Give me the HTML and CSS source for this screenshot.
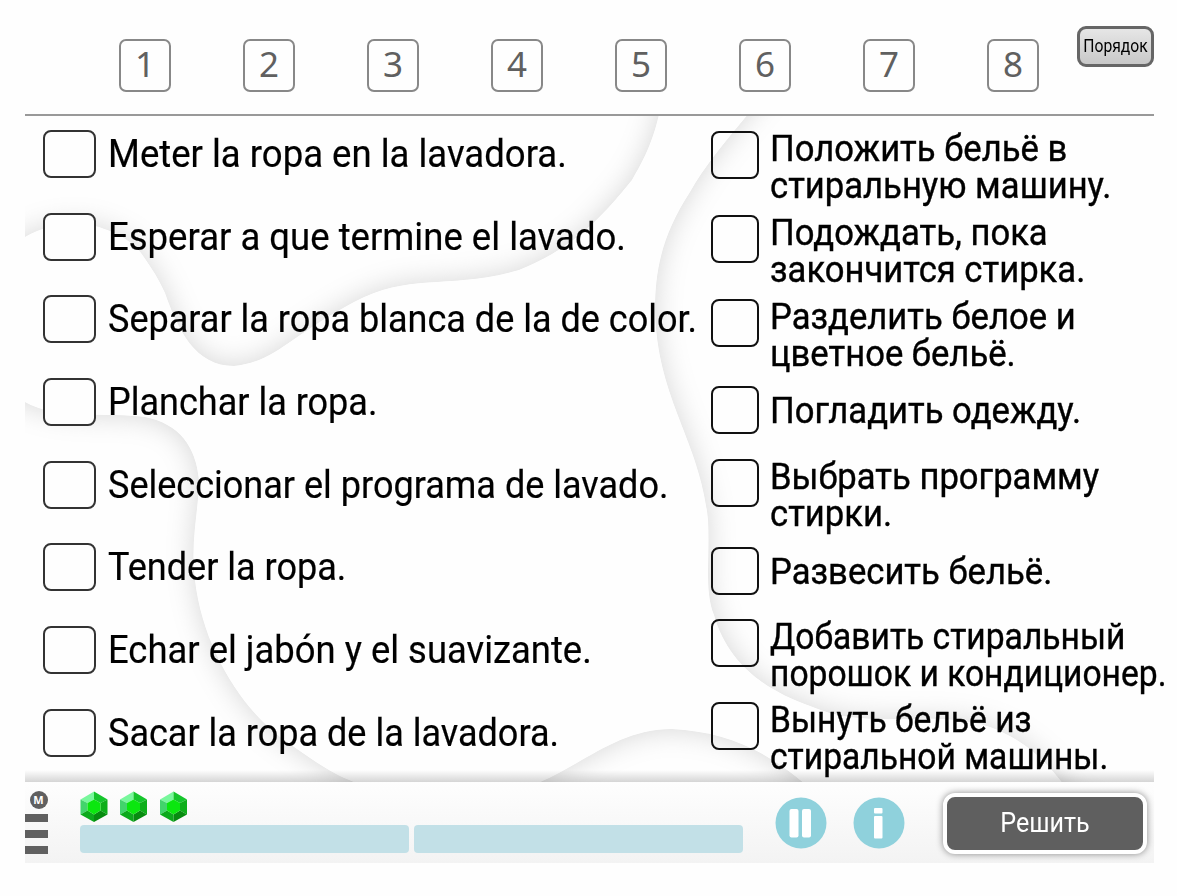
FILE: index.html
```html
<!DOCTYPE html>
<html lang="es">
<head>
    <meta charset="UTF-8">
    <meta name="viewport" content="width=device-width, initial-scale=1.0">
    <title>Meter la ropa en la lavadora</title>
    <link rel="stylesheet" href="styles.css">
</head>
<body>
    <div class="app">
        <header class="top">
            <ol class="numbers">
                <li>1</li>
                <li>2</li>
                <li>3</li>
                <li>4</li>
                <li>5</li>
                <li>6</li>
                <li>7</li>
                <li>8</li>
            </ol>
            <button class="order"><span>Порядок</span></button>
        </header>

        <main class="board">
            <svg class="waves" viewBox="25 116 1129 666" width="1129" height="666" aria-hidden="true">
                <defs>
                    <filter id="soft" x="-20%" y="-20%" width="140%" height="140%">
                        <feGaussianBlur stdDeviation="14"/>
                    </filter>
                    <path id="w1" d="M-60 290 Q0 245 25 237 C50 222 80 222 99 227 C125 236 135 245 141 253 C153 270 158 278 165 293 C178 330 195 366 234 366 C275 362 290 336 354 302 C410 272 450 290 519 270 C570 250 600 220 632 180 C648 152 660 130 668 60 L668 20 L-60 20 Z"/>
                    <path id="w2" d="M790 60 C755 110 712 152 690 192 C662 235 655 270 655 310 C657 400 700 440 708 520 C710 560 704 590 714 615 C728 664 765 690 810 706 C870 732 930 708 990 727 C1030 742 1050 765 1075 800 L1300 890 L1300 10 L790 10 Z"/>
                    <path id="w3" d="M-60 380 L25 402 C55 420 110 412 145 417 C180 424 196 447 199 480 C199 510 190 540 195 580 C203 650 245 715 290 744 C320 765 335 776 365 786 L365 870 L-60 870 Z"/>
                    <path id="w4" d="M530 786 C580 768 615 729 672 729 C725 732 762 748 805 784 L805 870 L530 870 Z"/>
                    <clipPath id="c1"><use href="#w1"/></clipPath>
                    <clipPath id="c2"><use href="#w2"/></clipPath>
                    <clipPath id="c3"><use href="#w3"/></clipPath>
                    <clipPath id="c4"><use href="#w4"/></clipPath>
                </defs>
                <g clip-path="url(#c1)"><use class="shade" href="#w1"/><use class="wave" href="#w1"/></g>
                <g clip-path="url(#c2)"><use class="shade" href="#w2"/><use class="wave" href="#w2"/></g>
                <g clip-path="url(#c3)"><use class="shade" href="#w3"/><use class="wave" href="#w3"/></g>
                <g clip-path="url(#c4)"><use class="shade" href="#w4"/><use class="wave" href="#w4"/></g>
            </svg>

            <ul class="list spanish">
                <li><span class="box"></span><p>Meter la ropa en la lavadora.</p></li>
                <li><span class="box"></span><p>Esperar a que termine el lavado.</p></li>
                <li><span class="box"></span><p>Separar la ropa blanca de la de color.</p></li>
                <li><span class="box"></span><p>Planchar la ropa.</p></li>
                <li><span class="box"></span><p>Seleccionar el programa de lavado.</p></li>
                <li><span class="box"></span><p>Tender la ropa.</p></li>
                <li><span class="box"></span><p>Echar el jabón y el suavizante.</p></li>
                <li><span class="box"></span><p>Sacar la ropa de la lavadora.</p></li>
            </ul>

            <ul class="list russian" lang="ru">
                <li><span class="box"></span><p>Положить бельё в<br>стиральную машину.</p></li>
                <li><span class="box"></span><p>Подождать, пока<br>закончится стирка.</p></li>
                <li><span class="box"></span><p>Разделить белое и<br>цветное бельё.</p></li>
                <li class="single"><span class="box"></span><p>Погладить одежду.</p></li>
                <li><span class="box"></span><p>Выбрать программу<br>стирки.</p></li>
                <li class="single"><span class="box"></span><p>Развесить бельё.</p></li>
                <li class="tight"><span class="box"></span><p>Добавить стиральный<br>порошок и кондиционер.</p></li>
                <li class="tight"><span class="box"></span><p>Вынуть бельё из<br>стиральной машины.</p></li>
            </ul>
        </main>

        <footer class="bottom">
            <div class="menu">
                <span class="menu-m">M</span>
                <i></i><i></i><i></i>
            </div>

            <div class="progress">
                <svg class="gems" width="110" height="32" viewBox="0 0 110 32">
                    <defs>
                        <g id="gem">
                            <path fill="#78f79c" d="M14 0.5 L0.5 8.5 L7.5 12 L14 8.5 Z"/>
                            <path fill="#15c52c" d="M14 0.5 L27.5 8.5 L20.5 12 L14 8.5 Z"/>
                            <path fill="#42d46c" d="M0.5 8.5 L7.5 12 V19.5 L0.5 23.5 Z"/>
                            <path fill="#0eae1a" d="M27.5 8.5 L20.5 12 V19.5 L27.5 23.5 Z"/>
                            <path fill="#0caa1c" d="M0.5 23.5 L7.5 19.5 L14 23.5 V31 Z"/>
                            <path fill="#078c10" d="M27.5 23.5 L20.5 19.5 L14 23.5 V31 Z"/>
                            <path fill="#0be70f" d="M14 8.5 L20.5 12 V19.5 L14 23.5 L7.5 19.5 V12 Z"/>
                        </g>
                    </defs>
                    <use href="#gem"/>
                    <use href="#gem" x="39.5"/>
                    <use href="#gem" x="79.5"/>
                </svg>
                <div class="bars">
                    <span></span>
                    <span></span>
                </div>
            </div>

            <div class="controls">
                <svg width="52" height="52" viewBox="0 0 52 52">
                    <circle cx="26" cy="26" r="25.5" fill="#8fd1dc"/>
                    <rect x="14.5" y="12" width="9" height="28.5" rx="2" fill="#fff"/>
                    <rect x="27" y="12" width="9" height="28.5" rx="2" fill="#fff"/>
                </svg>
                <svg width="52" height="52" viewBox="0 0 52 52">
                    <circle cx="26" cy="26" r="25.5" fill="#8fd1dc"/>
                    <rect x="21" y="11" width="8.5" height="5.5" rx="1" fill="#fff"/>
                    <rect x="21" y="19" width="8.5" height="22.5" rx="1" fill="#fff"/>
                </svg>
            </div>

            <button class="solve"><span>Решить</span></button>
        </footer>
    </div>
</body>
</html>
```
FILE: styles.css
```css
* {
    box-sizing: border-box;
}
body {
    margin: 0;
    background: #fefefe;
    color: #000;
    font-family: Roboto, "Noto Sans", sans-serif;
}
ul, ol {
    list-style: none;
    margin: 0;
    padding: 0;
}
p {
    margin: 0;
    white-space: nowrap;
    transform-origin: left top;
}
.app {
    width: 1129px;
    margin-left: 25px;
}
.top {
    display: flex;
    justify-content: space-between;
    align-items: flex-start;
    height: 116px;
    padding: 26px 0 0 94px;
    border-bottom: 2px solid #999;
}
.numbers {
    display: flex;
    gap: 72px;
    padding-top: 13px;
}
.numbers li {
    width: 52px;
    height: 53px;
    border: 2px solid #888;
    border-radius: 7px;
    color: #606060;
    font: 35px/45px "Noto Sans", sans-serif;
    text-align: center;
}
.order {
    width: 77px;
    height: 41px;
    padding: 0;
    border: 3px solid #666;
    border-radius: 9px;
    background: linear-gradient(#e6e6e6, #c8c8c8);
    color: #000;
    font: 18px Roboto, sans-serif;
}
.order span {
    display: block;
    margin: -2px -5px 0;
    transform: scaleX(0.87);
}
.board {
    position: relative;
    display: flex;
    height: 666px;
}
.board::after {
    content: "";
    position: absolute;
    left: 0;
    right: 0;
    bottom: 0;
    height: 12px;
    background: linear-gradient(rgba(0, 0, 0, 0), rgba(0, 0, 0, 0.16));
}
.waves {
    position: absolute;
    top: 0;
    left: 0;
}
/* blurred white over grey leaves a soft inner shadow along the edge */
.shade {
    fill: #d6d6d6;
}
.wave {
    fill: #fefefe;
    filter: url(#soft);
}
.list {
    position: relative;
    display: grid;
}
.list li {
    display: flex;
    align-items: flex-start;
}
.box {
    flex: none;
    width: 53px;
    height: 48px;
    border: 2px solid #333;
    border-radius: 8px;
}
.spanish {
    width: 668px;
    padding: 14px 0 0 18px;
    grid-template-rows: repeat(8, 82.7px);
}
.spanish .box {
    background: #fefefe;
}
.spanish p {
    margin-left: 12px;
    font-size: 38px;
    line-height: 48px;
    transform: scaleX(0.961);
    -webkit-text-stroke: 0.2px #000;
}
.spanish li:nth-child(n+3) p {
    transform: scaleX(0.948);
}
.spanish li:nth-child(7) p {
    transform: scaleX(0.958);
}
.russian {
    padding: 15px 0 0 18px;
    grid-template-rows: 84px 84px 87px 73px 88px 72px 83px 60px;
}
.russian .box {
    width: 48px;
    border-color: #111;
}
.russian p {
    width: 390px;
    margin: -1px 0 0 11px;
    font-size: 37px;
    line-height: 37.3px;
    transform: scaleX(0.936);
    -webkit-text-stroke: 0.4px #000;
}
.russian .single p {
    padding-top: 7px;
}
.russian .tight p {
    transform: scaleX(0.908);
}
.bottom {
    display: flex;
    height: 81px;
    background: linear-gradient(#fefefe, #f3f3f3);
}
.menu {
    display: flex;
    flex-direction: column;
    width: 23px;
    padding-top: 9px;
}
.menu-m {
    width: 18px;
    height: 18px;
    margin: 0 0 5px 4.5px;
    border-radius: 50%;
    background: #606060;
    color: #fff;
    font: bold 11px/18px "Open Sans", sans-serif;
    text-align: center;
}
.menu i {
    height: 8px;
    margin-bottom: 8px;
    background: #606060;
}
.progress {
    width: 663px;
    margin-left: 31.5px;
    padding-top: 9px;
}
.gems {
    display: block;
}
.bars {
    display: flex;
    gap: 5px;
    margin-top: 2px;
}
.bars span {
    flex: 1;
    height: 28px;
    border-radius: 4px;
    background: #c2e0e7;
}
.controls {
    display: flex;
    gap: 26px;
    padding-top: 15px;
    margin-left: 32.5px;
}
.solve {
    width: 204px;
    height: 61px;
    margin: 10.5px 0 0 37.5px;
    padding: 0;
    border: 4px solid #fff;
    border-radius: 12px;
    background: #5f5f5f;
    box-shadow: 0 0 7px rgba(0, 0, 0, 0.45);
    color: #fff;
    font: 27px Roboto, sans-serif;
}
.solve span {
    display: block;
    transform: scaleX(0.93);
}
```
